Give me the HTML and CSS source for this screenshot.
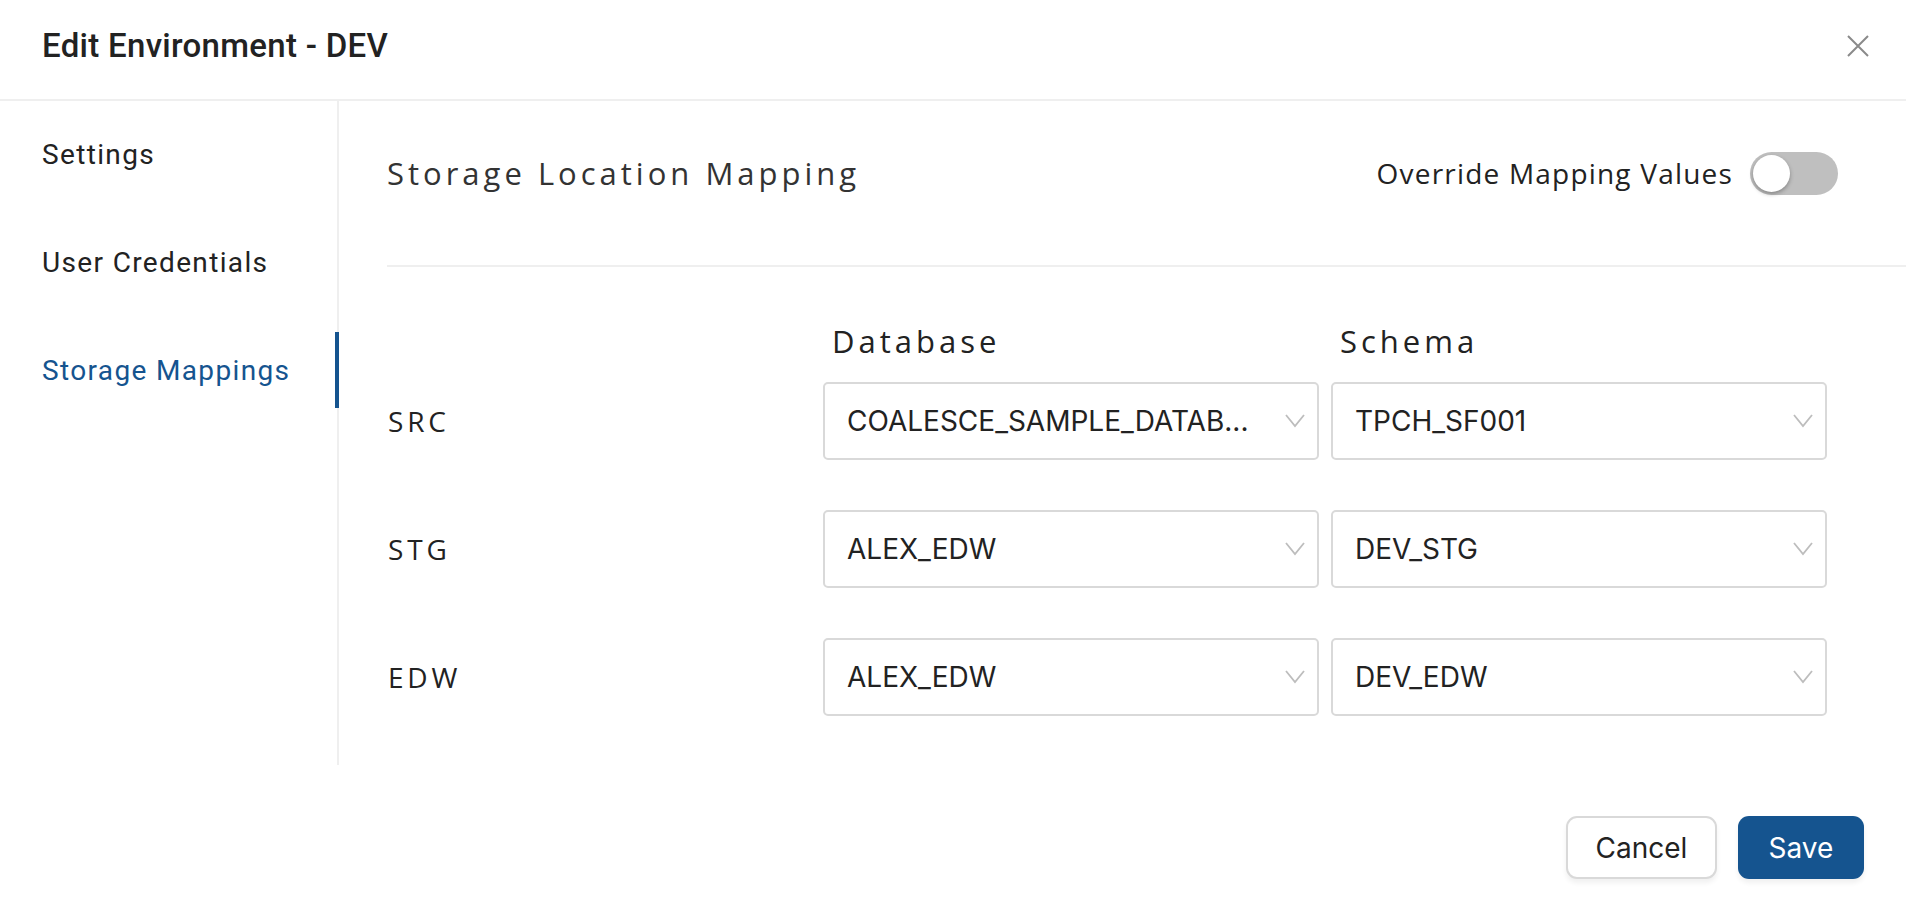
FILE: index.html
```html
<!DOCTYPE html>
<html lang="en">
<head>
    <meta charset="UTF-8">
    <meta name="viewport" content="width=device-width, initial-scale=1.0">
    <title>Edit Environment - DEV</title>
    <link rel="stylesheet" href="styles.css">
</head>
<body>

    <div class="modal">
        <header class="modal-header">
            <h1>Edit Environment - DEV</h1>
            <button class="close-btn" aria-label="Close">
                <svg width="22" height="22" viewBox="0 0 22 22">
                    <path d="M1 1 L21 21 M21 1 L1 21" stroke="#8a8a8a" stroke-width="2" fill="none"/>
                </svg>
            </button>
        </header>

        <div class="modal-body">
            <nav class="side-nav">
                <a class="nav-item">Settings</a>
                <a class="nav-item">User Credentials</a>
                <a class="nav-item active">Storage Mappings</a>
            </nav>

            <section class="content">
                <div class="content-head">
                    <h2>Storage Location Mapping</h2>
                    <label class="override">
                        <span>Override Mapping Values</span>
                        <span class="switch"><span class="knob"></span></span>
                    </label>
                </div>

                <div class="mapping">
                    <div class="map-row map-head">
                        <span></span>
                        <span class="col-title">Database</span>
                        <span class="col-title">Schema</span>
                    </div>
                    <div class="map-list">
                        <div class="map-row">
                            <span class="row-label">SRC</span>
                            <div class="select" title="COALESCE_SAMPLE_DATABASE"><span class="value">COALESCE_SAMPLE_DATAB...</span><svg class="chevron" width="20" height="14" viewBox="0 0 20 14"><path d="M1 1 L10 12 L19 1" stroke="#bdbdbd" stroke-width="1.8" fill="none"/></svg></div>
                            <div class="select"><span class="value">TPCH_SF001</span><svg class="chevron" width="20" height="14" viewBox="0 0 20 14"><path d="M1 1 L10 12 L19 1" stroke="#bdbdbd" stroke-width="1.8" fill="none"/></svg></div>
                        </div>
                        <div class="map-row">
                            <span class="row-label">STG</span>
                            <div class="select"><span class="value">ALEX_EDW</span><svg class="chevron" width="20" height="14" viewBox="0 0 20 14"><path d="M1 1 L10 12 L19 1" stroke="#bdbdbd" stroke-width="1.8" fill="none"/></svg></div>
                            <div class="select"><span class="value">DEV_STG</span><svg class="chevron" width="20" height="14" viewBox="0 0 20 14"><path d="M1 1 L10 12 L19 1" stroke="#bdbdbd" stroke-width="1.8" fill="none"/></svg></div>
                        </div>
                        <div class="map-row">
                            <span class="row-label">EDW</span>
                            <div class="select"><span class="value">ALEX_EDW</span><svg class="chevron" width="20" height="14" viewBox="0 0 20 14"><path d="M1 1 L10 12 L19 1" stroke="#bdbdbd" stroke-width="1.8" fill="none"/></svg></div>
                            <div class="select"><span class="value">DEV_EDW</span><svg class="chevron" width="20" height="14" viewBox="0 0 20 14"><path d="M1 1 L10 12 L19 1" stroke="#bdbdbd" stroke-width="1.8" fill="none"/></svg></div>
                        </div>
                    </div>
                </div>
            </section>
        </div>

        <footer class="modal-footer">
            <button class="btn btn-cancel">Cancel</button>
            <button class="btn btn-save">Save</button>
        </footer>
    </div>

</body>
</html>
```

FILE: styles.css
```css
body {
    margin: 0;
    padding: 0;
    background-color: #fff;
    color: #222;
    font-family: 'Roboto', sans-serif;
}
.modal {
    width: 1906px;
    height: 920px;
    display: flex;
    flex-direction: column;
    box-sizing: border-box;
}
.modal-header {
    height: 101px;
    box-sizing: border-box;
    padding: 0 37px 8px 42px;
    display: flex;
    align-items: center;
    justify-content: space-between;
    border-bottom: 2px solid #efefef;
}
.modal-header h1 {
    margin: 0;
    font-size: 33px;
    font-weight: 500;
    letter-spacing: 0.3px;
    color: #222;
}
.close-btn {
    border: none;
    background: none;
    padding: 0;
    width: 22px;
    height: 22px;
    cursor: pointer;
    display: flex;
}
.modal-body {
    height: 664px;
    display: flex;
}
.side-nav {
    width: 337px;
    border-right: 2px solid #efefef;
    padding-top: 15px;
    display: flex;
    flex-direction: column;
    gap: 32px;
}
.nav-item {
    height: 76px;
    padding-left: 42px;
    margin-right: -2px;
    border-right: 4px solid transparent;
    display: flex;
    align-items: center;
    font-size: 28px;
    letter-spacing: 1.35px;
    color: #222;
    cursor: pointer;
}
.nav-item.active {
    color: #15548f;
    border-right-color: #15548f;
}
.content {
    flex: 1;
    padding-left: 48px;
}
.content-head {
    height: 166px;
    box-sizing: border-box;
    padding: 0 68px 20px 0;
    display: flex;
    align-items: center;
    justify-content: space-between;
    border-bottom: 2px solid #efefef;
}
.content-head h2 {
    margin: 0;
    font-family: 'Open Sans', sans-serif;
    font-size: 31px;
    font-weight: 400;
    letter-spacing: 4px;
    color: #333;
}
.override {
    display: flex;
    align-items: center;
    gap: 17px;
    font-family: 'Open Sans', sans-serif;
    font-size: 28px;
    letter-spacing: 1.2px;
    color: #222;
}
.switch {
    width: 88px;
    height: 43px;
    box-sizing: border-box;
    padding: 3px;
    border-radius: 22px;
    background-color: #bfbfbf;
    display: flex;
    align-items: center;
}
.knob {
    width: 37px;
    height: 37px;
    border-radius: 50%;
    background-color: #fff;
    box-shadow: 0 2px 4px rgba(0, 0, 0, 0.3);
}
.mapping {
    padding-top: 53px;
}
.map-row {
    display: grid;
    grid-template-columns: 424px 496px 496px;
    column-gap: 12px;
    align-items: center;
}
.map-head {
    height: 40px;
    margin-bottom: 22px;
}
.col-title {
    padding-left: 9px;
    font-family: 'Open Sans', sans-serif;
    font-size: 31px;
    letter-spacing: 4px;
    color: #222;
}
.map-list {
    display: flex;
    flex-direction: column;
    gap: 50px;
}
.row-label {
    padding-left: 1px;
    font-family: 'Open Sans', sans-serif;
    font-size: 28px;
    letter-spacing: 3.8px;
    color: #222;
}
.select {
    height: 78px;
    box-sizing: border-box;
    border: 2px solid #d9d9d9;
    border-radius: 5px;
    padding: 0 12px 0 22px;
    display: flex;
    align-items: center;
    justify-content: space-between;
    font-family: 'Inter', sans-serif;
    font-size: 28px;
    color: #222;
}
.value {
    white-space: nowrap;
}
.chevron {
    flex-shrink: 0;
}
.modal-footer {
    flex: 1;
    padding: 51px 42px 0 0;
    display: flex;
    justify-content: flex-end;
    align-items: flex-start;
    gap: 21px;
}
.btn {
    height: 63px;
    border-radius: 11px;
    font-family: 'Inter', sans-serif;
    font-size: 28px;
    cursor: pointer;
    box-shadow: 0 4px 5px rgba(0, 0, 0, 0.06);
}
.btn-cancel {
    width: 151px;
    background-color: #fff;
    border: 2px solid #d9d9d9;
    color: #222;
}
.btn-save {
    width: 126px;
    background-color: #15548f;
    border: none;
    color: #fff;
}
```
